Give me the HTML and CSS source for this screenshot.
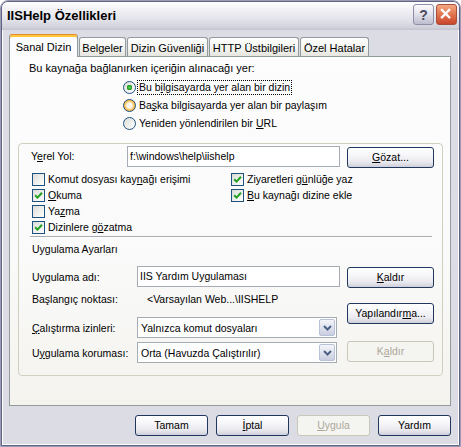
FILE: index.html
```html
<!DOCTYPE html>
<html lang="tr">
<head>
<meta charset="utf-8">
<title>IISHelp Özellikleri</title>
<link rel="stylesheet" href="styles.css">
</head>
<body>
<div class="window">
  <div class="frame">
    <header class="titlebar">
      <span class="title">IISHelp Özellikleri</span>
      <div class="caption">
        <span class="cap-btn cap-help">?</span>
        <span class="cap-btn cap-close"><svg viewBox="0 0 21 21" width="19" height="19"><path d="M5.5 5.5 L13.5 13.5 M13.5 5.5 L5.5 13.5" stroke="#fff" stroke-width="2.6" stroke-linecap="square"/></svg></span>
      </div>
    </header>
    <main class="client">
      <nav class="tabs">
        <div class="tab active t1">Sanal Dizin</div>
        <div class="tab t2">Belgeler</div>
        <div class="tab t3">Dizin Güvenliği</div>
        <div class="tab t4">HTTP Üstbilgileri</div>
        <div class="tab t5">Özel Hatalar</div>
      </nav>
      <section class="page">
        <div class="prompt">Bu kaynağa bağlanırken içeriğin alınacağı yer:</div>
        <div class="radios">
          <div class="radio"><span class="rb checked"></span><span class="rlabel focus">Bu b<u>i</u>lgisayarda yer alan bir dizin</span></div>
          <div class="radio"><span class="rb hover"></span><span class="rlabel">Ba<u>ş</u>ka bilgisayarda yer alan bir paylaşım</span></div>
          <div class="radio"><span class="rb"></span><span class="rlabel">Yeniden yönlendirilen bir <u>U</u>RL</span></div>
        </div>
        <div class="group">
          <div class="path-row">
            <span class="path-label">Y<u>e</u>rel Yol:</span>
            <div class="textbox path-box">f:\windows\help\iishelp</div>
            <button class="btn side-btn path-btn"><u>G</u>özat...</button>
          </div>
          <div class="checks">
            <div class="check"><span class="cb"></span><span>Komut dosyası kay<u>n</u>ağı erişimi</span></div>
            <div class="check"><span class="cb on"><svg viewBox="0 0 11 11" width="11" height="11"><path d="M2.2 5.2 L4.5 7.6 L9 2.8" fill="none" stroke="#21a121" stroke-width="2"/></svg></span><span>Ziyaretleri g<u>ü</u>nlüğe yaz</span></div>
            <div class="check"><span class="cb on"><svg viewBox="0 0 11 11" width="11" height="11"><path d="M2.2 5.2 L4.5 7.6 L9 2.8" fill="none" stroke="#21a121" stroke-width="2"/></svg></span><span><u>O</u>kuma</span></div>
            <div class="check"><span class="cb on"><svg viewBox="0 0 11 11" width="11" height="11"><path d="M2.2 5.2 L4.5 7.6 L9 2.8" fill="none" stroke="#21a121" stroke-width="2"/></svg></span><span><u>B</u>u kaynağı dizine ekle</span></div>
            <div class="check"><span class="cb"></span><span>Ya<u>z</u>ma</span></div>
            <div class="check empty"></div>
            <div class="check"><span class="cb on"><svg viewBox="0 0 11 11" width="11" height="11"><path d="M2.2 5.2 L4.5 7.6 L9 2.8" fill="none" stroke="#21a121" stroke-width="2"/></svg></span><span>Dizinlere g<u>ö</u>zatma</span></div>
          </div>
          <div class="sep"></div>
          <div class="section-title">Uygulama Ayarları</div>
          <div class="app">
            <div class="app-left">
              <div class="app-row">
                <span class="app-label">Uygulama adı:</span>
                <div class="textbox app-box">IIS Yardım Uygulaması</div>
              </div>
              <div class="app-row text-row">
                <span class="app-label">Başlangıç noktası:</span>
                <span class="app-value">&lt;Varsayılan Web...\IISHELP</span>
              </div>
              <div class="app-row">
                <span class="app-label"><u>Ç</u>alıştırma izinleri:</span>
                <div class="select"><span class="select-text">Yalnızca komut dosyaları</span><span class="select-arrow"><svg viewBox="0 0 9 6" width="9" height="6"><path d="M1 1 L4.5 4.5 L8 1" fill="none" stroke="#4d6185" stroke-width="2"/></svg></span></div>
              </div>
              <div class="app-row last-row">
                <span class="app-label">U<u>y</u>gulama koruması:</span>
                <div class="select"><span class="select-text">Orta (Havuzda Çalıştırılır)</span><span class="select-arrow"><svg viewBox="0 0 9 6" width="9" height="6"><path d="M1 1 L4.5 4.5 L8 1" fill="none" stroke="#4d6185" stroke-width="2"/></svg></span></div>
              </div>
            </div>
            <div class="app-right">
              <button class="btn side-btn b-remove"><u>K</u>aldır</button>
              <button class="btn side-btn b-config">Yapılandır<u>m</u>a...</button>
              <button class="btn side-btn b-remove2" disabled>K<u>a</u>ldır</button>
            </div>
          </div>
        </div>
      </section>
      <footer class="actions">
        <button class="btn act">Tamam</button>
        <button class="btn act"><u>İ</u>ptal</button>
        <button class="btn act" disabled><u>U</u>ygula</button>
        <button class="btn act">Yardım</button>
      </footer>
    </main>
  </div>
</div>
</body>
</html>
```

FILE: styles.css
```css
* { box-sizing: border-box; }
html, body { margin: 0; padding: 0; }
body {
  width: 461px;
  height: 447px;
  overflow: hidden;
  background: #ffffff;
  font-family: "Liberation Sans", Arial, sans-serif;
  font-size: 10.5px;
  color: #000;
}
u { text-decoration: underline; text-underline-offset: 1px; }

.window {
  width: 461px;
  height: 447px;
  border: 1px solid #9c9cb4;
  border-radius: 8px 8px 0 0;
  background: #dcdce4;
}
.frame {
  height: 100%;
  border: 1px solid #5f6285;
  border-radius: 7px 7px 0 0;
  box-shadow: inset 0 0 0 1px #ffffff;
  display: flex;
  flex-direction: column;
}

/* title bar */
.titlebar {
  height: 28px;
  flex: none;
  display: flex;
  align-items: flex-start;
  justify-content: space-between;
  padding: 2px 2px 0 5px;
  border-radius: 6px 6px 0 0;
  background: linear-gradient(#ffffff 0%, #f2f2f6 25%, #e4e4ec 60%, #d2d2dc 90%, #c4c4d0 100%);
}
.title {
  font-weight: bold;
  font-size: 13px;
  line-height: 24px;
  color: #000;
}
.caption { display: flex; gap: 2px; }
.cap-btn {
  width: 21px;
  height: 21px;
  border-radius: 3px;
  display: flex;
  align-items: center;
  justify-content: center;
}
.cap-help {
  border: 1px solid #8e8fa6;
  background: linear-gradient(#fbfbfd, #e4e4ee 45%, #bdbdcf);
  color: #4a4a5c;
  font-weight: bold;
  font-size: 14px;
}
.cap-close {
  border: 1px solid #a4503c;
  background: linear-gradient(#f3a883, #e47a52 45%, #c9452c);
}

/* client */
.client {
  flex: 1;
  display: flex;
  flex-direction: column;
  padding: 0 8px 0 7px;
}
.tabs {
  height: 26px;
  display: flex;
  align-items: flex-end;
  flex: none;
}
.tab {
  height: 19px;
  border: 1px solid #919b9c;
  border-bottom: none;
  border-radius: 3px 3px 0 0;
  background: linear-gradient(#ffffff, #f3f3ef 60%, #e6e5df);
  display: flex;
  align-items: center;
  justify-content: center;
  padding-top: 1px;
  white-space: nowrap;
  margin-left: 1px;
  font-size: 11px;
}
.tab.active {
  height: 23px;
  margin-bottom: -1px;
  margin-left: 0;
  position: relative;
  z-index: 1;
  background: #fcfcfe;
  border-top: 1px solid #e68b2c;
  box-shadow: inset 0 2px #ffc73c;
  padding-top: 2px;
}
.t1 { width: 69px; }
.t2 { width: 47px; }
.t3 { width: 81px; }
.t4 { width: 90px; }
.t5 { width: 69px; }

.page {
  height: 350px;
  flex: none;
  border: 1px solid #919b9c;
  background: linear-gradient(#fdfdfe 0%, #fafafa 55%, #f4f3ee 100%);
  padding: 5px 7px 0 8px;
}
.prompt {
  line-height: 13px;
  margin-left: 11px;
  font-size: 11px;
}
.radios {
  margin: 3px 0 0 105px;
}
.radio {
  height: 18px;
  display: flex;
  align-items: center;
}
.rb {
  width: 13px;
  height: 13px;
  border-radius: 50%;
  border: 1px solid #1c5180;
  background: linear-gradient(135deg, #dcdcd7, #ffffff);
  margin-right: 2px;
  flex: none;
}
.rb.checked {
  background:
    radial-gradient(circle at 50% 50%, #5fd35f 0, #2aa32a 2px, #1f8f1f 2.6px, transparent 3px),
    linear-gradient(135deg, #dcdcd7, #ffffff);
}
.rb.hover {
  background:
    radial-gradient(circle at 50% 50%, #ffffff 0, #fdf7e8 2.5px, #fcd58a 3.8px, #f7b13b 5.5px, #f1a02a 6px);
}
.rlabel {
  line-height: 13px;
  padding: 0 1px;
}
.rlabel.focus { outline: 1px dotted #000; outline-offset: 0; }

/* group */
.group {
  width: 425px;
  height: 233px;
  margin-top: 11px;
  border: 1px solid #d0d0bf;
  border-radius: 4px;
  padding: 2px 0 0 0;
}
.path-row {
  display: flex;
  align-items: flex-start;
  padding-left: 12px;
}
.path-label {
  width: 96px;
  line-height: 21px;
}
.textbox {
  height: 21px;
  border: 1px solid #a5acb5;
  background: #fff;
  line-height: 19px;
  padding-left: 2px;
  white-space: nowrap;
  overflow: hidden;
}
.path-box { width: 213px; }
.btn {
  height: 21px;
  border: 1px solid #21375f;
  border-radius: 3px;
  background: linear-gradient(#ffffff 0%, #f6f6f9 40%, #e8e8ee 75%, #cfcfd9 100%);
  font-family: inherit;
  font-size: 10.5px;
  color: #000;
  padding: 0;
  line-height: 19px;
  text-align: center;
}
.btn:disabled {
  border-color: #c9c7ba;
  background: #f4f4f1;
  color: #aca899;
}
.side-btn { width: 87px; display: block; }
.path-btn { margin: 1px 0 0 7px; }

.checks {
  margin-top: 3px;
  padding-left: 13px;
  display: grid;
  grid-template-columns: 199px auto;
  grid-auto-rows: 16px;
}
.check {
  display: flex;
  align-items: center;
  white-space: nowrap;
}
.cb {
  width: 13px;
  height: 13px;
  border: 1px solid #1c5180;
  background: linear-gradient(135deg, #dcdcd7, #ffffff);
  margin-right: 3px;
  flex: none;
  display: flex;
  align-items: center;
  justify-content: center;
}
.sep {
  height: 2px;
  margin: 1px 10px 0 11px;
  border-top: 1px solid #acacb0;
  border-bottom: 1px solid #ffffff;
}
.section-title {
  margin-top: 5px;
  padding-left: 13px;
  line-height: 13px;
}
.app {
  margin-top: 10px;
  padding-left: 13px;
  display: flex;
}
.app-row {
  display: flex;
  align-items: center;
  height: 21px;
}
.app-row.text-row {
  height: 30px;
  align-items: flex-start;
  padding-top: 6px;
  line-height: 13px;
}
.app-row.last-row { margin-top: 4px; }
.app-label { width: 105px; white-space: nowrap; }
.app-box { width: 203px; }
.app-value { padding-left: 10px; white-space: nowrap; }
.select {
  width: 200px;
  height: 21px;
  border: 1px solid #a5acb5;
  background: #fff;
  display: flex;
  align-items: center;
  justify-content: space-between;
  padding: 1px;
}
.select-text { padding-left: 2px; white-space: nowrap; }
.select-arrow {
  width: 16px;
  height: 17px;
  border: 1px solid #b9c1d8;
  border-radius: 2px;
  background: linear-gradient(#f4f5fa, #dfe2ee 50%, #c9cde0);
  display: flex;
  align-items: center;
  justify-content: center;
}
.app-right {
  margin-left: 7px;
  display: flex;
  flex-direction: column;
}
.b-remove { margin-top: 1px; }
.b-config { margin-top: 15px; }
.b-remove2 { margin-top: 17px; }

.actions {
  margin-top: 9px;
  display: flex;
  justify-content: flex-end;
  gap: 8px;
}
.act { width: 73px; }
```
